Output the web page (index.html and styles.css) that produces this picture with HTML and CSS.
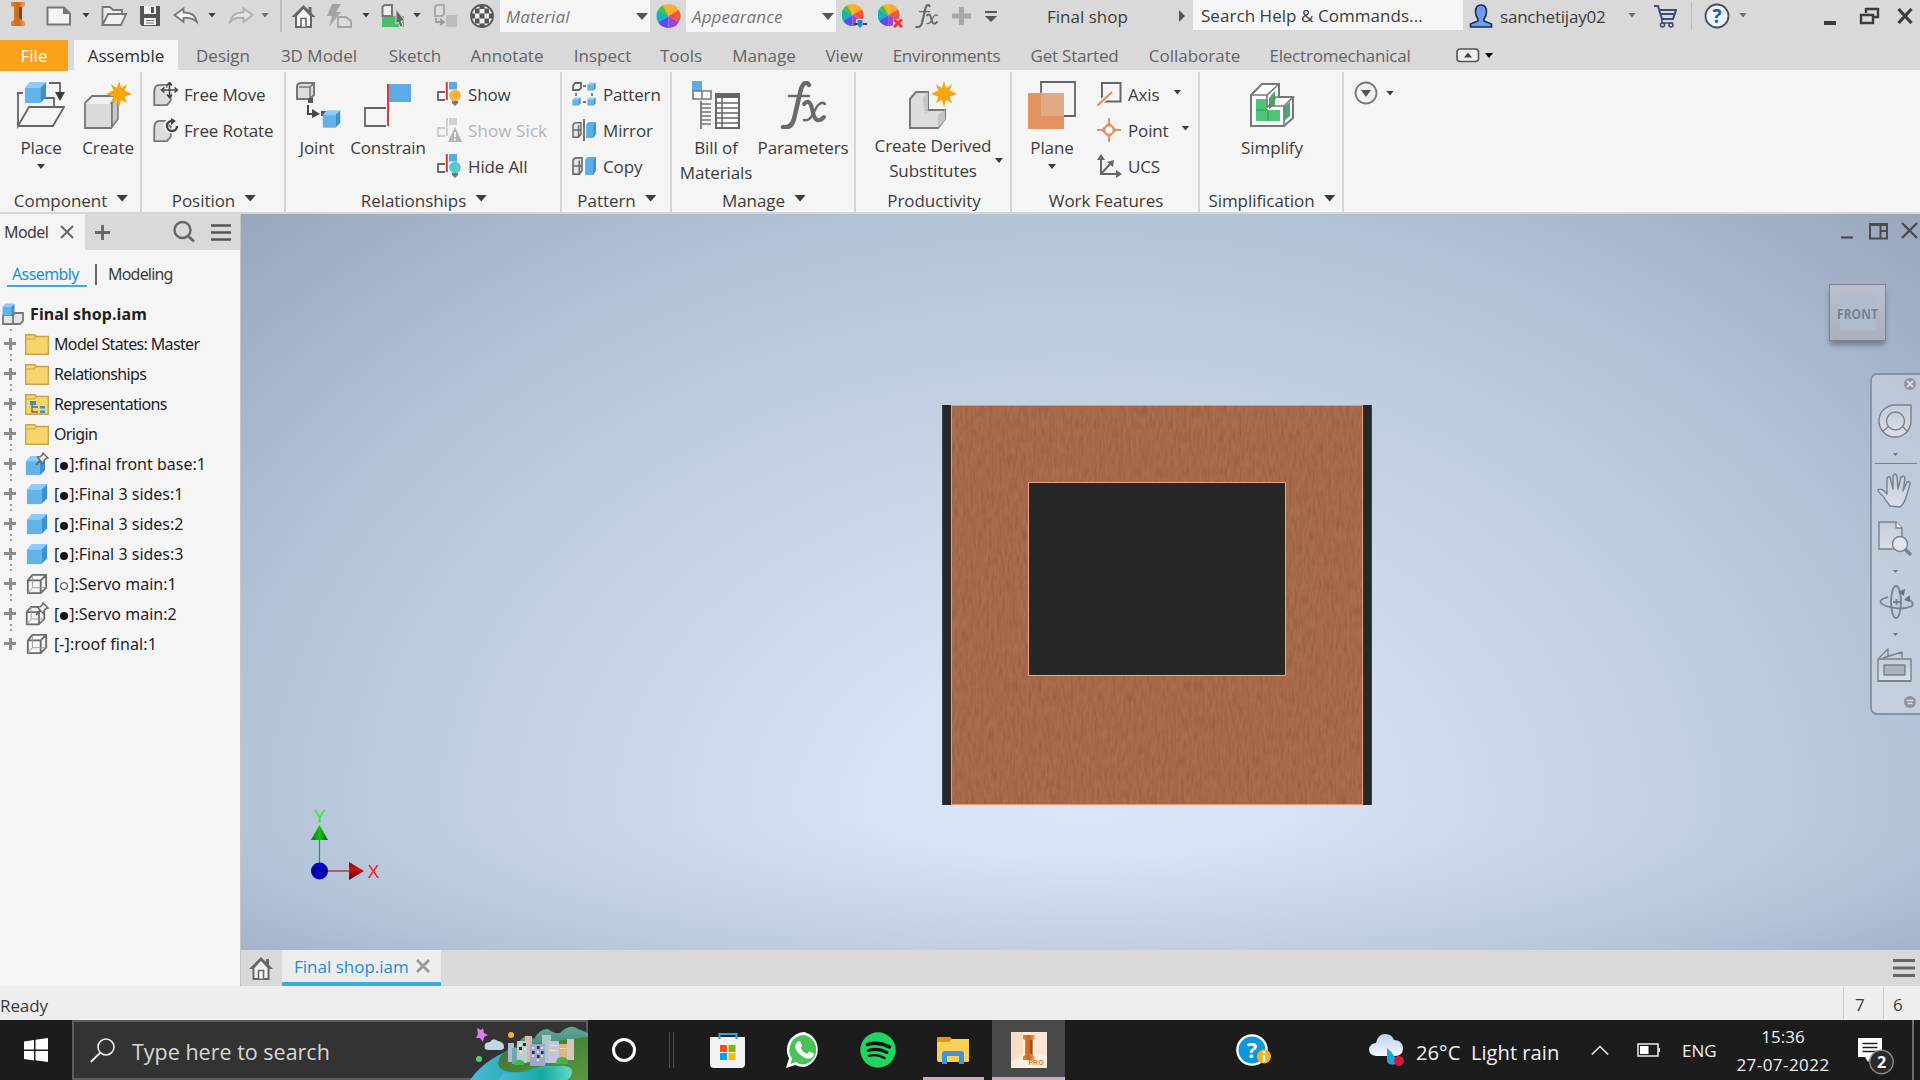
FILE: index.html
```html
<!DOCTYPE html>
<html lang="en">
<head>
<meta charset="utf-8">
<title>Final shop</title>
<link rel="stylesheet" href="styles.css">
</head>
<body>
<svg class="defs" width="0" height="0" aria-hidden="true">
  <defs>
    <linearGradient id="gBeam" x1="0" x2="1"><stop offset="0" stop-color="#e08a3a"/><stop offset=".5" stop-color="#c8661c"/><stop offset="1" stop-color="#e9a050"/></linearGradient>
    <linearGradient id="gNav" x1="0" y1="0" x2="0" y2="1"><stop offset="0" stop-color="#c4ccd8"/><stop offset="1" stop-color="#d9e0ea"/></linearGradient>
    <linearGradient id="gCone" x1="0" x2="1"><stop offset="0" stop-color="#067a06"/><stop offset=".5" stop-color="#10c010"/><stop offset="1" stop-color="#056b05"/></linearGradient>
    <linearGradient id="gConeR" x1="0" x2="0" y1="0" y2="1"><stop offset="0" stop-color="#7a0808"/><stop offset=".4" stop-color="#d01010"/><stop offset="1" stop-color="#5c0505"/></linearGradient>
    <linearGradient id="gCloud" x1="0" x2="0" y1="0" y2="1"><stop offset="0" stop-color="#bcd0f2"/><stop offset="1" stop-color="#f6f8ff"/></linearGradient>
    <linearGradient id="gWater" x1="0" x2="1"><stop offset="0" stop-color="#4fb9d8"/><stop offset=".6" stop-color="#14a8a4"/><stop offset="1" stop-color="#62dcc4"/></linearGradient>
    <linearGradient id="gGrass" x1="0" x2="1" y1="0" y2="1"><stop offset="0" stop-color="#3a7034"/><stop offset="1" stop-color="#5a983e"/></linearGradient>
    <linearGradient id="gHill" x1="0" x2="0" y1="0" y2="1"><stop offset="0" stop-color="#5ea898"/><stop offset="1" stop-color="#28604c"/></linearGradient>
    <filter id="fWood" x="0" y="0" width="100%" height="100%" color-interpolation-filters="sRGB">
      <feTurbulence type="fractalNoise" baseFrequency="0.38 0.08" numOctaves="2" seed="4"/>
      <feColorMatrix values="0 0 0 0 .52  0 0 0 0 .31  0 0 0 0 .2  .9 0 0 0 -.34"/>
    </filter>
    <symbol id="cube" viewBox="0 0 24 24"><path d="M1 7 6 1h17l-6 6z" fill="#8ccbff"/><path d="M1 7h16v16H1z" fill="#63b3e8"/><path d="m17 7 6-6v16l-6 6z" fill="#3b92d0"/></symbol>
    <symbol id="wirecube" viewBox="0 0 24 24"><g fill="none" stroke="#6b6b6b" stroke-width="2" stroke-linejoin="round"><path d="M2 8h14v14H2zM2 8l5-6h15l-6 6M22 2v14l-6 6"/><path d="M7 2v14h15M7 16l-5 6" stroke-width="1" stroke="#999"/></g></symbol>
    <symbol id="pin" viewBox="0 0 14 14"><path d="m8 1 5 5-2 .6-2 2-.4 3L5.500 9 1 13l4-5-2.500-3 3-.4 2-2z" fill="#eee" stroke="#666" stroke-width="1.400"/></symbol>
    <symbol id="folder" viewBox="0 0 24 21"><path d="M.7.7h9L11.500 2.500H23.300V20.300H.7z" fill="#f6d66c" stroke="#c9a344" stroke-width="1.400"/><path d="M1 5h8l2-2.500" fill="none" stroke="#c9a344" stroke-width="1.200"/></symbol>
    <symbol id="home" viewBox="0 0 24 24"><path d="M12 1 0 13h3.500v11h17V13H24L20 9V3h-3v3z" fill="#666"/><path d="M12 5 5.500 12v10h13V12z" fill="#f3f3f3"/><path d="M9.500 22.500v-8h5v8" fill="#fff" stroke="#666" stroke-width="1.600"/></symbol>
    <symbol id="wheel" viewBox="0 0 24 24"><g><path d="M12 12V0A12 12 0 0 1 22.400 6z" fill="#ffab26"/><path d="M12 12 1.600 6A12 12 0 0 1 12 0z" fill="#f0b429"/><path d="M12 12 22.400 6A12 12 0 0 1 22.400 18z" fill="#f2563c"/><path d="M12 12 22.400 18A12 12 0 0 1 12 24z" fill="#a340dc"/><path d="M12 12V24A12 12 0 0 1 1.600 18z" fill="#5a4df5"/><path d="M12 12 1.600 18A12 12 0 0 1 1.600 6z" fill="#0fb5b8"/><path d="M1.600 6A12 12 0 0 1 6 1.600L12 12z" fill="#49c23f"/></g></symbol>
    <symbol id="burst" viewBox="0 0 24 24"><path d="m12 0 2 6.500L19.500 3l-2.300 5.800L24 12l-6.800 2.500 2.300 6L14 17.500 12 24l-2-6.500-5.500 3 2.300-6L0 12l6.800-3.200L4.500 3 10 6.500z" fill="#f8a512"/></symbol>
    <symbol id="block" viewBox="0 0 20 24"><path d="M1 9q0-8 6-8h8v3l4 3v11l-4 5H1z" fill="#dcdcdc" stroke="#777" stroke-width="2"/></symbol>
    <symbol id="rel" viewBox="0 0 24 24"><path d="M8 10H1v8h7" fill="none" stroke="#666" stroke-width="1.800"/><path d="M9.800 0v18" stroke="#d8393a" stroke-width="2"/><path d="M12 0h8v7.500h-8z" fill="#5dabe2"/></symbol>
    <symbol id="half" viewBox="0 0 12 20"><path d="M1 4q1-3 4-3h6v14l-3 4H1zM1 10h10M8 4v15" fill="#e4e4e4" stroke="#6b6b6b" stroke-width="1.800"/></symbol>
    <symbol id="halfb" viewBox="0 0 12 20"><path d="M0 4q1-4 4-4h8v15l-3 5H0z" fill="#5aaeea"/><path d="m9 4 3-4v15l-3 5zM0 10h12" fill="#3b92d0"/></symbol>
    <symbol id="fx" viewBox="0 0 48 48"><g fill="none" stroke="#6a6a6a" stroke-linecap="round"><path d="M30 4q-4-6-8 4L15 38q-3 10-11 8" stroke-width="4.500"/><path d="M10 15h20" stroke-width="2.500"/><path d="M25 23q6-6 8 5l2 7q3 8 10 1" stroke-width="4"/><path d="M46 23q-5-4-10 6-5 12-11 10" stroke-width="2.500"/></g></symbol>
  </defs>
</svg>

<div class="app">
  <header class="titlebar">
    <svg class="i-logo" width="20" height="26" viewBox="0 0 20 26"><path d="M3 1h14v4l-3 1v13l3 2v4H3v-4l3-2V6L3 5z" fill="url(#gBeam)"/><path d="M11 6h3v13l-3-2z" fill="#8a4212"/></svg>
    <svg width="26" height="20" viewBox="0 0 26 20"><path d="M1.500 1.500H18l6 6v11H1.500z" fill="#f3f3f3" stroke="#777" stroke-width="2"/><path d="M17 1v7h7" fill="#777"/></svg>
    <i class="arr"></i>
    <svg width="27" height="22" viewBox="0 0 27 22"><path d="M1.500 20V2H9l3 3h9v4M1.500 20 7 9h18l-5 11z" fill="#f0f0f0" stroke="#777" stroke-width="1.800"/></svg>
    <svg width="24" height="24" viewBox="0 0 24 24"><path d="M2 2h20v20H4l-2-2z" fill="#555"/><path d="M6 2h12v8H6z" fill="#f3f3f3"/><path d="M13 3h3v6h-3z" fill="#555"/><path d="M6 14h12v7H6z" fill="#f3f3f3"/><path d="M8 16.500h8M8 19h8" stroke="#777"/></svg>
    <svg width="26" height="18" viewBox="0 0 26 18"><path d="m1.500 8 9-6.500V5.500Q22 5 24 15q-5-5-13.500-4v4z" fill="#f3f3f3" stroke="#777" stroke-width="1.800"/></svg>
    <i class="arr"></i>
    <svg width="26" height="18" viewBox="0 0 26 18"><path d="m24.500 8-9-6.500V5.500Q4 5 2 15q5-5 13.500-4v4z" fill="#e4e4e4" stroke="#b0b0b0" stroke-width="2"/></svg>
    <i class="arr arr-mid"></i>
    <i class="vsep"></i>
    <svg width="25" height="24"><use href="#home"/></svg>
    <svg width="26" height="24" viewBox="0 0 26 24"><path d="M5 0h9L9 8h5L2 23l3-11H0z" fill="#a4a4a4"/><path d="M11 13h8l5 4v6H11z" fill="#ddd" stroke="#a4a4a4" stroke-width="1.800"/></svg>
    <i class="arr"></i>
    <svg width="26" height="24" viewBox="0 0 26 24"><path d="M1 12h22v11H1z" fill="#45bf6c"/><path d="M1.500 12V3l2-2H11v11z" fill="#eee" stroke="#777" stroke-width="2"/><path d="m15 5 9 12h-4l2 5-3 1-2-5-2 2z" fill="#666" stroke="#d9d9d9"/></svg>
    <i class="arr"></i>
    <svg width="26" height="24" viewBox="0 0 26 24"><path d="M2 11V3l2-2h7v9l-2 2H2z" fill="#ddd" stroke="#aaa" stroke-width="2"/><path d="M3 14v4h6M7 15l4 3-4 3" fill="none" stroke="#999" stroke-width="1.800"/><path d="M13 11h11v11l-2 1H13z" fill="#bcbcbc"/></svg>
    <svg width="24" height="24" viewBox="0 0 24 24"><circle cx="12" cy="12" r="11" fill="#f0f0f0" stroke="#555" stroke-width="1.800"/><path d="M9.500 1h5v4h-5zM5 4.500h4.500v5H5zM14.500 4.500H19v5h-4.500zM9.500 9.500h5v5h-5zM1 9.500h4v5H1zM19 9.500h4v5h-4zM5 14.500h4.500v5H5zM14.500 14.500H19v5h-4.500zM9.500 19.500h5V23h-5z" fill="#555"/></svg>
    <div class="combo"><em>Material</em><i class="arr arr-lg"></i></div>
    <svg width="25" height="24"><use href="#wheel"/></svg>
    <div class="combo"><em>Appearance</em><i class="arr arr-lg"></i></div>
    <svg width="25" height="24" viewBox="0 0 25 24"><use href="#wheel" x="-1" width="23" height="22"/><path d="M14 15h11v9H14z" fill="#d9d9d9"/><path d="M12 20h4M21 20h4" stroke="#444" stroke-width="2"/><path d="M15.500 16h5v5l-2.500 3-2.500-3z" fill="#1887d6"/></svg>
    <svg width="25" height="24" viewBox="0 0 25 24"><use href="#wheel" x="-1" width="23" height="22"/><path d="M15 15h10v9H15z" fill="#d9d9d9"/><path d="m16 15.500 8 7.500m0-7.500-8 7.500" stroke="#f0353a" stroke-width="3"/></svg>
    <svg width="25" height="24"><use href="#fx"/></svg>
    <svg class="plus" width="19" height="18" viewBox="0 0 19 18"><path d="M7 0h5v6.500h7v5h-7V18H7v-6.500H0v-5h7z" fill="#a8a8a8"/></svg>
    <svg width="14" height="11" viewBox="0 0 14 11"><path d="M1 0h12v2H1zM1 5h12l-6 6z" fill="#555"/></svg>
    <span class="tt">Final shop</span>
    <svg width="7" height="12" viewBox="0 0 7 12"><path d="m1 0 6 6-6 6z" fill="#555"/></svg>
    <div class="search">Search Help &amp; Commands...</div>
    <svg width="24" height="24" viewBox="0 0 24 24"><path d="M12 1q5.500 0 5.500 7 0 4-2.500 7v2l7.500 3v3h-21v-3L9 17v-2q-2.500-3-2.500-7Q6.500 1 12 1z" fill="#6f9df5" stroke="#1c2b55" stroke-width="1.600"/></svg>
    <span class="tt user">sanchetijay02</span>
    <i class="arr arr-mid"></i>
    <svg width="24" height="24" viewBox="0 0 24 24"><path d="M1 2h4l4 13h11l3-9H6M7 10h14" fill="none" stroke="#3b4a7c" stroke-width="2"/><path d="M9 15v4h11" fill="none" stroke="#3b4a7c" stroke-width="1.600"/><circle cx="9.500" cy="21" r="2" fill="#d9d9d9" stroke="#3b4a7c" stroke-width="1.600"/><circle cx="18" cy="21" r="2" fill="#d9d9d9" stroke="#3b4a7c" stroke-width="1.600"/></svg>
    <i class="vsep vsep-thin"></i>
    <svg width="26" height="26" viewBox="0 0 26 26"><circle cx="13" cy="13" r="11.500" fill="#eef1f8" stroke="#444b5c" stroke-width="1.800"/><text x="13" y="20" text-anchor="middle" class="qmark">?</text></svg>
    <i class="arr arr-mid"></i>
    <i class="win-min"></i>
    <svg width="21" height="18" viewBox="0 0 21 18"><path d="M7 6V2h12v8h-5M2 8h12v8H2z" fill="none" stroke="#3c3c3c" stroke-width="2.400"/></svg>
    <svg width="16" height="16" viewBox="0 0 16 16"><path d="m1.500 1 13 14m0-14-13 14" stroke="#3c3c3c" stroke-width="3.200"/></svg>
  </header>

  <nav class="tabs">
    <span class="tab file">File</span><span class="tab active">Assemble</span><span class="tab">Design</span><span class="tab">3D Model</span><span class="tab">Sketch</span><span class="tab">Annotate</span><span class="tab">Inspect</span><span class="tab">Tools</span><span class="tab">Manage</span><span class="tab">View</span><span class="tab wide">Environments</span><span class="tab wide">Get Started</span><span class="tab">Collaborate</span><span class="tab wide">Electromechanical</span>
    <span class="tab-toggle"><svg width="24" height="15" viewBox="0 0 24 15"><rect x="1" y="1" width="21.500" height="12.500" rx="3" fill="#eee" stroke="#555" stroke-width="1.600"/><path d="m12 4.500 4 5H8z" fill="#444"/></svg><i class="arr arr-black"></i></span>
  </nav>

  <section class="ribbon">
    <div class="panel">
      <div class="panel-body">
        <div class="big b-82"><svg width="48" height="48" viewBox="0 0 48 48"><path d="M6 12H1v33L12 26h35L36 45H1M26 17h11v8M32 2h11v12" fill="none" stroke="#666" stroke-width="1.800"/><path d="M38 11h10l-5 9z" fill="#3c3c3c"/><use href="#cube" x="7" y="0" width="23" height="23"/></svg><span>Place</span><i class="arr"></i></div>
        <div class="big b-52"><svg width="48" height="48" viewBox="0 0 48 48"><path d="M1 22 8 15h26l-7 7v25H1z" fill="#f0f0f0" stroke="#777" stroke-width="1.800"/><path d="M2 23h25v23H2z" fill="#dadada"/><path d="m28 22 6-7v23l-6 8z" fill="#c6c6c6" stroke="#777" stroke-width="1.500"/><use href="#burst" x="22" y="0" width="26" height="26"/></svg><span>Create</span></div>
      </div>
      <div class="panel-title">Component<i class="arr arr-title"></i></div>
    </div>
    <div class="panel">
      <div class="panel-body">
        <div class="list l-11">
          <div class="row"><svg width="25" height="24" viewBox="0 0 25 24"><use href="#block" x="0" y="2" width="19" height="22"/><path d="M16.500 1v13M10 8h14" fill="none" stroke="#f5f5f5" stroke-width="4"/><path d="M16.500 1v14M9 8h15M14 3.500l2.500-3 2.500 3M14 12.500l2.500 3 2.500-3M21.500 5.500l3 2.500-3 2.500M11.500 5.500 8.500 8l3 2.500" fill="none" stroke="#444" stroke-width="1.600"/></svg><span>Free Move</span></div>
          <div class="row"><svg width="25" height="24" viewBox="0 0 25 24"><use href="#block" x="0" y="2" width="19" height="22"/><path d="M23 7a5 5 0 1 1-4-4" fill="none" stroke="#f5f5f5" stroke-width="5"/><path d="M24 8a5 5 0 1 1-5-5" fill="none" stroke="#444" stroke-width="2.400"/><path d="m18 0 5 3-5 4z" fill="#444"/></svg><span>Free Rotate</span></div>
        </div>
      </div>
      <div class="panel-title">Position<i class="arr arr-title"></i></div>
    </div>
    <div class="panel">
      <div class="panel-body">
        <div class="big b-62"><svg width="48" height="48" viewBox="0 0 48 48"><path d="M4 18V6q0-4 4-4h13v12l-4 4H4z" fill="#dcdcdc" stroke="#777" stroke-width="2"/><path d="M17 6v12M21 2l-4 4H6" fill="none" stroke="#777" stroke-width="1.500"/><path d="M15 17h5v5h-5zM28 30h5v5h-5z" fill="#555"/><path d="M15 24v9h6" fill="none" stroke="#444" stroke-width="2"/><path d="m19 28 8 5-8 4z" fill="#444"/><use href="#cube" x="29" y="28" width="19" height="20"/></svg><span>Joint</span></div>
        <div class="big b-80"><svg width="48" height="48" viewBox="0 0 48 48"><path d="M25 3h22v18H25z" fill="#5dabe2"/><path d="M22 27H1v18h21" fill="none" stroke="#666" stroke-width="1.800"/><path d="M24 3v42" stroke="#d8393a" stroke-width="2"/></svg><span>Constrain</span></div>
        <div class="list l-9">
          <div class="row"><svg width="25" height="24" viewBox="0 0 25 24"><use href="#rel" width="24" height="24"/><circle cx="18" cy="13.500" r="5.800" fill="#f6b23c"/><path d="M15 19h6v2l-3 3-3-3z" fill="#777"/></svg><span>Show</span></div>
          <div class="row disabled"><svg width="25" height="24" viewBox="0 0 25 24"><path d="M8 10H1v8h7M10 0v18" fill="none" stroke="#ccc" stroke-width="1.800"/><path d="M12 0h8v7h-8z" fill="#d2d2d2"/><path d="m18 9 7 15H11z" fill="#b4b4b4"/><path d="M18 14v5M18 20.500v2" stroke="#fff" stroke-width="1.600"/></svg><span>Show Sick</span></div>
          <div class="row"><svg width="25" height="24" viewBox="0 0 25 24"><use href="#rel" width="24" height="24"/><circle cx="18" cy="13.500" r="5.800" fill="#58c8cc"/><path d="M15 19h6v2l-3 3-3-3z" fill="#777"/></svg><span>Hide All</span></div>
        </div>
      </div>
      <div class="panel-title">Relationships<i class="arr arr-title"></i></div>
    </div>
    <div class="panel">
      <div class="panel-body">
        <div class="list l-10">
          <div class="row"><svg width="25" height="24" viewBox="0 0 25 24"><path d="M1 8V4l2-3h6v5L7 8z" fill="#eee" stroke="#666" stroke-width="1.800"/><use href="#cube" x="15" y="0" width="9" height="9"/><use href="#cube" x="0" y="15" width="9" height="9"/><use href="#cube" x="15" y="15" width="9" height="9"/><path d="M11 4h3M11 20h3M4 11v3M20 11v3" stroke="#777" stroke-width="1.800"/></svg><span>Pattern</span></div>
          <div class="row"><svg width="25" height="22" viewBox="0 0 25 22"><use href="#half" x="0" y="3" width="10" height="16"/><path d="M12 0v22" stroke="#666" stroke-width="1.800"/><use href="#halfb" x="14" y="3" width="10" height="16"/></svg><span>Mirror</span></div>
          <div class="row"><svg width="25" height="20" viewBox="0 0 25 20"><use href="#half" x="0" y="1" width="11" height="18"/><use href="#halfb" x="13" y="1" width="11" height="18"/></svg><span>Copy</span></div>
        </div>
      </div>
      <div class="panel-title">Pattern<i class="arr arr-title"></i></div>
    </div>
    <div class="panel">
      <div class="panel-body">
        <div class="big b-88"><svg width="48" height="48" viewBox="0 0 48 48"><path d="M0 0h10v10H0z" fill="#5dabe2"/><path d="M1 10h9v8H1zM10 10h9v8h-9z" fill="#fff" stroke="#777" stroke-width="1.600"/><path d="M9 20v28" stroke="#666" stroke-width="1.600"/><path d="M9 23h10M9 27h10M9 31h10M9 35h10M9 39h10M9 43h10" stroke="#777" stroke-width="1.600"/><path d="M24 13h23v34H24z" fill="#fff" stroke="#666" stroke-width="2"/><path d="M23 12h25v5H23z" fill="#666"/><path d="M24 22h23M24 27h23M24 32h23M24 37h23M24 42h23M30 16v31" stroke="#666" stroke-width="1.500"/></svg><span>Bill of<br>Materials</span></div>
        <div class="big b-86"><svg width="48" height="48"><use href="#fx"/></svg><span>Parameters</span></div>
      </div>
      <div class="panel-title">Manage<i class="arr arr-title"></i></div>
    </div>
    <div class="panel">
      <div class="panel-body">
        <div class="big b-124"><svg width="48" height="48" viewBox="0 0 48 48"><path d="M1 18 7 11h12v18h17v9l-7 9H1z" fill="#dcdcdc" stroke="#777" stroke-width="2"/><path d="m14 17 5-6v18l-3 4zM29 34l7-5v10l-7 8z" fill="#c4c4c4"/><use href="#burst" x="22" y="0" width="26" height="26"/></svg><span>Create Derived<br>Substitutes</span></div>
        <i class="arr arr-side"></i>
      </div>
      <div class="panel-title">Productivity</div>
    </div>
    <div class="panel">
      <div class="panel-body">
        <div class="big b-80"><svg width="48" height="48" viewBox="0 0 48 48"><path d="M13 1h34v34H13z" fill="none" stroke="#666" stroke-width="1.800"/><path d="M0 12h36v36H0z" fill="#e2935f"/><path d="M13 12h23v23H13z" fill="#e0aa86"/></svg><span>Plane</span><i class="arr"></i></div>
        <div class="list l-5">
          <div class="row"><svg width="25" height="24" viewBox="0 0 25 24"><path d="M5 1h18.500v18.500H5z" fill="none" stroke="#666" stroke-width="2"/><path d="M0 24 15 10" stroke="#f5f5f5" stroke-width="5"/><path d="M0 24 15 10" stroke="#e8905c" stroke-width="2.200"/></svg><span>Axis</span><i class="arr a-axis"></i></div>
          <div class="row"><svg width="25" height="24" viewBox="0 0 25 24"><path d="M12 0v24M0 12h24" stroke="#dd9468" stroke-width="2"/><path d="m12 4 8 8-8 8-8-8z" fill="#dd9468"/><circle cx="12" cy="12" r="3.500" fill="#fff"/></svg><span>Point</span><i class="arr a-point"></i></div>
          <div class="row"><svg width="25" height="24" viewBox="0 0 25 24"><path d="M4 4v16h16M4 20 14 9" fill="none" stroke="#666" stroke-width="2"/><path d="m4 0 4 6H0zM25 20l-6 4v-8zM17 6l-1 7-6-5z" fill="#666"/></svg><span>UCS</span></div>
        </div>
      </div>
      <div class="panel-title">Work Features</div>
    </div>
    <div class="panel">
      <div class="panel-body">
        <div class="big b-142"><svg width="48" height="48" viewBox="0 0 48 48"><path d="M3 14 14 3h17v13h14v21l-9 8H3z" fill="#fff" stroke="#777" stroke-width="2"/><path d="M8 18h11v11h13v11H8z" fill="#4cc57a"/><path d="m21 17 6-7v14l-6 4zM36 26l6-5v14l-6 5z" fill="#3fae68"/><path d="M3 14h16L31 3M19 14v13M20 26l8-10h17l-9 9H20M36 25v20" fill="none" stroke="#777" stroke-width="1.600"/><path d="M8 29h12M20 29v11" stroke="#2f9456"/></svg><span>Simplify</span></div>
      </div>
      <div class="panel-title">Simplification<i class="arr arr-title"></i></div>
    </div>
    <div class="ribbon-end"><svg width="24" height="24" viewBox="0 0 24 24"><circle cx="12" cy="12" r="10.500" fill="#f3f3f3" stroke="#777" stroke-width="1.800"/><path d="M7 9h10l-5 7z" fill="#555"/></svg><i class="arr"></i></div>
  </section>

  <main class="work">
    <aside class="browser">
      <div class="browser-tabs">
        <div class="browser-tab"><span>Model</span><svg width="14" height="14" viewBox="0 0 14 14"><path d="m1 1 12 12M13 1 1 13" stroke="#666" stroke-width="2"/></svg></div>
        <svg class="b-plus" width="15" height="15" viewBox="0 0 15 15"><path d="M7.500 0v15M0 7.500h15" stroke="#666" stroke-width="2.800"/></svg>
        <svg width="22" height="22" viewBox="0 0 22 22"><circle cx="9.500" cy="9" r="8" fill="none" stroke="#666" stroke-width="2.400"/><path d="m14.500 14.500 6.500 6" stroke="#666" stroke-width="2.800"/></svg>
        <svg class="b-menu" width="20" height="17" viewBox="0 0 20 17"><path d="M0 1.500h20M0 8.500h20M0 15.500h20" stroke="#555" stroke-width="2.600"/></svg>
      </div>
      <div class="modes"><span class="mode on">Assembly</span><i class="mode-sep"></i><span class="mode">Modeling</span></div>
      <div class="root"><svg width="22" height="22" viewBox="0 0 22 22"><path d="M1 12h10v9H1zM11 12l2-2h8v8l-3 3h-7z" fill="#e4e4e4" stroke="#777" stroke-width="1.800"/><use href="#cube" x="0" y="0" width="13" height="13"/></svg><b>Final shop.iam</b></div>
      <ul class="tree">
        <li><i class="exp"></i><svg width="24" height="21"><use href="#folder"/></svg><span class="group">Model States: Master</span></li>
        <li><i class="exp"></i><svg width="24" height="21"><use href="#folder"/></svg><span class="group">Relationships</span></li>
        <li><i class="exp"></i><svg width="24" height="21" viewBox="0 0 24 21"><use href="#folder"/><path d="M7 9v9h6M7 13h6" fill="none" stroke="#666" stroke-width="1.400"/><path d="M5 7h6v4H5zM15 12h5v2.500h-5zM15 16.500h5V19h-5z" fill="#3f90c8"/></svg><span class="group">Representations</span></li>
        <li><i class="exp"></i><svg width="24" height="21"><use href="#folder"/></svg><span class="group">Origin</span></li>
        <li><i class="exp"></i><svg width="24" height="24" viewBox="0 0 24 24"><use href="#cube" x="0" y="3" width="21" height="21"/><use href="#pin" x="10" y="0" width="14" height="14"/></svg><span>[<i class="dot"></i>]:final front base:1</span></li>
        <li><i class="exp"></i><svg width="24" height="22"><use href="#cube"/></svg><span>[<i class="dot"></i>]:Final 3 sides:1</span></li>
        <li><i class="exp"></i><svg width="24" height="22"><use href="#cube"/></svg><span>[<i class="dot"></i>]:Final 3 sides:2</span></li>
        <li><i class="exp"></i><svg width="24" height="22"><use href="#cube"/></svg><span>[<i class="dot"></i>]:Final 3 sides:3</span></li>
        <li><i class="exp"></i><svg width="24" height="22"><use href="#wirecube"/></svg><span>[<i class="dot ring"></i>]:Servo main:1</span></li>
        <li><i class="exp"></i><svg width="24" height="24" viewBox="0 0 24 24"><use href="#wirecube" x="0" y="3" width="21" height="21"/><use href="#pin" x="10" y="0" width="14" height="14"/></svg><span>[<i class="dot"></i>]:Servo main:2</span></li>
        <li><i class="exp"></i><svg width="24" height="22"><use href="#wirecube"/></svg><span class="loose">[-]:roof final:1</span></li>
      </ul>
    </aside>

    <section class="stage">
      <div class="viewport">
        <svg class="model" width="430" height="400" viewBox="0 0 430 400"><path d="M0 0h9v400H0z" fill="#262727"/><path d="M420.500 0h9.500v400h-9.500z" fill="#262727"/><path d="M.5 0v400M421 0v400M429.500 0v400" stroke="#3c4347"/><path d="M9 0h411.500v400H9z" fill="#a96c4d"/><path d="M9 0h411.500v400H9z" filter="url(#fWood)"/><path d="M9.500.5h411v399h-411z" fill="none" stroke="#ee9877"/><path d="M86.500 77.500h257v193h-257z" fill="#272727" stroke="#f7a283"/></svg>
        <svg class="triad" width="70" height="80" viewBox="0 0 70 80"><path d="M11.500 30v32" stroke="#18a818" stroke-width="1.200"/><path d="M11 63h31" stroke="#b01818" stroke-width="1.200"/><path d="m11.500 17 8.500 15H3z" fill="url(#gCone)"/><path d="M41 54v18l15-9z" fill="url(#gConeR)"/><circle cx="11.500" cy="63" r="8.500" fill="#06069c"/><text x="11.500" y="69" class="ax ax-z">Z</text><text x="11.500" y="15" class="ax ax-y">Y</text><text x="65.500" y="69.500" class="ax ax-x">X</text></svg>
        <div class="doc-controls"><svg width="77" height="18" viewBox="0 0 77 18"><path d="M0 15.500h12" stroke="#4c4c4c" stroke-width="2.200"/><path d="M29 2h17v14.500H29zM39.500 3v13M40 9h6" fill="none" stroke="#4c4c4c" stroke-width="2"/><path d="M28 1h19v3H28z" fill="#4c4c4c"/><path d="m61 1 15 15m0-15L61 16" stroke="#4c4c4c" stroke-width="2.400"/></svg></div>
        <div class="viewcube"><div class="face"><span>FRONT</span></div></div>
        <div class="navbar">
          <svg width="50" height="342" viewBox="0 0 50 342">
            <rect x="1" y="1" width="54" height="340" rx="6" fill="#d4dae4" fill-opacity=".5" stroke="#8591a2" stroke-width="1.800"/>
            <g stroke="#78818f" stroke-width="1.400" fill="url(#gNav)" stroke-linejoin="round">
              <circle cx="40" cy="11" r="6" fill="#8d949f" stroke="none"/><path d="m37 8 6 6m0-6-6 6" stroke="#d9dfe8" stroke-width="1.800"/>
              <path d="M26 32h15v16a16 16 0 1 1-15-16z"/><circle cx="25.500" cy="48" r="9"/><path d="m18 54-6 5M33 54l5 5"/>
              <path d="M23 80h5l-2.500 3z" fill="#69727f" stroke="none"/><path d="M5 90.500h42" stroke-width="1"/>
              <path d="M20 133q-4-5-7-10-5-4-5-6 3-3 9 4V106q0-3 3-2l3 12V103q2-4 4 0l1 13 3-12q3-2 4 1l-2 13 4-9q3-1 3 2-2 8-4 13-2 7-6 10z"/>
              <path d="M9 149h17l6 6v21H9z"/><path d="M26 149v6h6" fill="#fff"/><circle cx="30" cy="171" r="7.500" fill="#dfe5ee"/><path d="m35 176 6 6" stroke-width="3.500"/>
              <path d="M23 197h5l-2.500 3z" fill="#69727f" stroke="none"/>
              <g fill="none" stroke-width="1.800"><ellipse cx="26" cy="229" rx="5" ry="16"/><path d="M18 224q-14 4-2 9 16 5 26 0 3-4-6-8M23 229h7M26.500 226v6"/><path d="m28 219 6 4 1-7zM34 227l6 2v-7z" fill="#69727f" stroke="none"/></g>
              <path d="M23 260h5l-2.500 3z" fill="#69727f" stroke="none"/>
              <path d="m9 285 9-9v8M13 285l19-6v6" fill="none"/><path d="M8 286h33v22H8z"/><path d="M8 308h33" stroke-width="2"/><path d="M14 292h21v10H14z" fill="#aab3c0"/>
              <circle cx="40" cy="329" r="6" fill="#8d949f" stroke="none"/><path d="M36.500 327.500h7M37.500 330.500h5" stroke="#d9dfe8" stroke-width="1.500"/>
            </g>
          </svg>
        </div>
      </div>
      <div class="doc-tabs"><div class="doc-home"><svg width="24" height="24"><use href="#home"/></svg></div><div class="doc-tab"><span>Final shop.iam</span><svg width="14" height="14" viewBox="0 0 14 14"><path d="m1 1 12 12M13 1 1 13" stroke="#999" stroke-width="2.800"/></svg></div><svg class="doc-menu" width="22" height="18" viewBox="0 0 22 18"><path d="M0 1.500h22M0 9h22M0 16.500h22" stroke="#666" stroke-width="2.800"/></svg></div>
    </section>
  </main>

  <div class="status"><span>Ready</span><span class="cell c7">7</span><span class="cell">6</span></div>

  <footer class="taskbar">
    <div class="start"><svg width="24" height="24" viewBox="0 0 24 24"><path d="M0 3.500 10 2v9.500H0zM11.500 1.800 24 0v11.500H11.500zM0 13h10v9.500L0 21zM11.500 13H24v11l-12.500-1.800z" fill="#fff"/></svg></div>
    <div class="find">
      <svg class="lens" width="25" height="25" viewBox="0 0 25 25"><circle cx="16" cy="9" r="8" fill="none" stroke="#eee" stroke-width="1.600"/><path d="M10.500 14.500.8 24" stroke="#eee" stroke-width="1.800"/></svg>
      <span>Type here to search</span>
      <svg class="city" width="118" height="60" viewBox="0 0 118 60">
        <path d="M46 26Q54 13 60 16l4 3Q70 8 78 9q6 5 12 4 10-10 18-4l10 4v47H46z" fill="url(#gHill)"/>
        <path d="M0 60Q14 40 40 30q40-6 60 20l-4 10z" fill="url(#gWater)"/>
        <path d="M28 44Q30 26 60 24L118 17v43H90q14-12-10-14-14 0-28 6-22 2-24-8z" fill="url(#gGrass)"/>
        <path d="M34 52q24 2 44-5 26-4 24 6-1 5-5 7H28z" fill="url(#gWater)"/>
        <path d="M38 23h6v19h-6z" fill="#b9b7d6"/><path d="M42 28h8v16h-8z" fill="#6fa6b4"/><path d="M55 16h7v26h-7z" fill="#d8b7a8"/><path d="M72 15h9v28h-9z" fill="#a9cac4"/><path d="M47 21h10v22H47z" fill="#bccfd0"/><path d="M60 24h15v22H60z" fill="#9ba9d6"/><path d="M78 21h11v22H78z" fill="#c7c3e0"/><path d="M89 24h8v16h-8z" fill="#e0b48a"/><path d="M97 19h7v21h-7z" fill="#d9c6ba"/>
        <path d="M49 24h2v2h-2zM54 28h2v2h-2zM50 31h2v2h-2zM62 27h2v2h-2zM67 31h2v2h-2zM71 27h2v2h-2zM62 35h2v2h-2zM71 35h2v2h-2zM67 39h2v2h-2zM80 25h7v1h-7zM80 30h7v1h-7zM90 28h6v1h-6z" fill="#ffe88a"/><path d="M53 23h3v3h-3zM49 27h3v3h-3zM67 26h2.500v3H67zM62 31h2.500v3H62zM71 31h2.500v3H71zM67 35h2.500v3H67z" fill="#272c40"/>
        <path d="M44 45q1-6 6-5 5 0 4 5zM86 44q0-8 7-7 6 1 5 7z" fill="#43b649"/>
        <path d="M15 29q-2-7 5-7 3-5 8-1 6 1 6 6 0 3-4 3H18z" fill="#c3d7ea"/><path d="m7 8 4 2 2-2 1 5 4 2-4 2-1 5-3-4H6l2-4z" fill="#e27af4"/><circle cx="41" cy="15" r="3" fill="#ffb21c"/><circle cx="9" cy="39" r="3" fill="#4dd07a"/>
      </svg>
    </div>
    <div class="cortana"><i class="o"></i></div>
    <div class="grip"></div>
    <svg width="36" height="36" viewBox="0 0 36 36"><path d="M9.500 8V2h17v6" fill="none" stroke="#2aa7e4" stroke-width="2.200"/><path d="M0 5h35v27q0 4-4 4H4q-4 0-4-4z" fill="#f2f2f2"/><path d="M9.500 7V5M26.500 7V5" stroke="#2aa7e4" stroke-width="2.200"/><path d="M10 13h7v7h-7z" fill="#f25022"/><path d="M18.500 13h7v7h-7z" fill="#7fba00"/><path d="M10 21h7v7h-7z" fill="#00a4ef"/><path d="M18.500 21h7v7h-7z" fill="#ffb900"/></svg>
    <svg width="36" height="36" viewBox="0 0 36 36"><path d="M18 0a18 18 0 0 1 0 35q-5 0-8.500-2L0 36l3-9.500A18 18 0 0 1 18 0z" fill="#fff"/><path d="M18 3a15 15 0 0 1 0 29.500q-5 0-8-2.500l-5.500 2L6 26.500A15 15 0 0 1 18 3z" fill="#49c25a"/><path d="M12 9.500q2-1 3 1l1 3q0 1-1.500 2.500 2 4 6.500 6 1.500-2.500 2.500-2.500l4 2q1 .8-.5 3.200-3 3.300-7.500 1.300-7-3-10-9.500-1-4.500 2.500-7z" fill="#fff"/></svg>
    <svg width="36" height="36" viewBox="0 0 36 36"><circle cx="18" cy="18" r="17.700" fill="#1fd660"/><g fill="none" stroke="#111" stroke-linecap="round"><path d="M7.500 12.500q11-3.500 22 2.500" stroke-width="3.500"/><path d="M8.500 18.500q9.500-3 18.500 2" stroke-width="3"/><path d="M9 24q8-2.500 15.500 2" stroke-width="2.400"/></g></svg>
    <div class="task explorer"><svg width="33" height="28" viewBox="0 0 33 28"><path d="M0 1h13l2 2v6H0z" fill="#dd9c0c"/><path d="M0 6h12l3-3h17v22q0 1-2 1H2q-2 0-2-2z" fill="#fbd055"/><path d="M5 28V18q0-3 3-3h16q3 0 3 3v10h-5v-8H10v8z" fill="#3d95dd"/></svg></div>
    <div class="task inventor"><svg width="36" height="36" viewBox="0 0 36 36"><path d="M0 0h36v36H0z" fill="#fdeee0"/><path d="m0 0 12 0v22L0 30z" fill="#f9dcc4"/><path d="m24 20 12 4V0L20 0z" fill="#fae4d2"/><path d="M12 3h11.500v4l-2 1v15l2 1.500V28H12v-3.500l2-1.500V8l-2-1z" fill="url(#gBeam)"/><path d="M19 8h2.500v15L19 21z" fill="#9a5018"/><text x="25" y="33" class="pro">PRO</text></svg></div>
    <svg width="37" height="32" viewBox="0 0 37 32"><circle cx="16" cy="16" r="15.800" fill="#fff"/><circle cx="16" cy="16" r="13.500" fill="#0d96dc"/><text x="16" y="24" class="hq">?</text><circle cx="28" cy="22.500" r="7" fill="#f4b024"/><path d="M28 17v2.500M28 21v7" stroke="#fff" stroke-width="2.400"/></svg>
    <svg width="36" height="32" viewBox="0 0 36 32"><path d="M7 22Q0 21 0 15.500 1 9 7 9 9 0 16 0q7 0 9 6 8 0 9 8 0 8-8 8z" fill="url(#gCloud)"/><path d="M18 14q10 8 9 16-8 2-9-3z" fill="#1ba4e4"/><circle cx="30" cy="27" r="5" fill="#d8153a"/></svg>
    <span class="weather">26°C&nbsp; Light rain</span>
    <svg width="18" height="10" viewBox="0 0 18 10"><path d="m.8 9.500 8.200-8 8.200 8" fill="none" stroke="#e8e8e8" stroke-width="1.600"/></svg>
    <svg width="23" height="14" viewBox="0 0 23 14"><path d="M1 1h20v12H1z" fill="none" stroke="#eee" stroke-width="1.500"/><path d="M3 3h8.500v8H3z" fill="#fff"/><path d="M22.200 5v4" stroke="#eee" stroke-width="1.600"/></svg>
    <span class="lang">ENG</span>
    <div class="clock"><span class="time">15:36</span><span class="date">27-07-2022</span></div>
    <div class="notif"><svg width="38" height="38" viewBox="0 0 38 38"><path d="M0 1h24v19H13l-3 5-3-5H0z" fill="#fff"/><path d="M4.500 6.500h15M4.500 10.500h15M4.500 14.500h15" stroke="#1c1c1c" stroke-width="1.400"/><circle cx="23.500" cy="25" r="11.700" fill="#2b2b2b" stroke="#8a8a8a" stroke-width="1.400"/><text x="23.500" y="31" class="cnt">2</text></svg></div>
    <i class="peek"></i>
  </footer>
</div>
</body>
</html>
```
FILE: styles.css
```css
* { box-sizing: border-box; }
body { margin: 0; background: #f5f5f5; font-family: "Open Sans", "Noto Sans", sans-serif; font-size: 17px; color: #3c3c3c; }
svg { display: block; flex: none; }
.defs { position: absolute; }
.app { width: 1920px; height: 1080px; display: grid; grid-template-rows: 40px 32px 142px 772px 34px 60px; overflow: hidden; white-space: nowrap; }

/* dropdown triangles */
.arr { display: block; flex: none; width: 8px; height: 5px; background: #3c3c3c; clip-path: polygon(0 0, 100% 0, 50% 100%); }
.titlebar > .arr { margin: -2px 0 0 0; }
.titlebar > .arr-mid { margin-left: -1px; }
.arr-mid { background: #6d6d6d; }
.arr-black { background: #000; }
.arr-lg { width: 12px; height: 7px; background: #555; }
.arr-title { width: 12px; height: 7px; }

/* title bar */
.titlebar { background: #d9d9d9; padding-left: 8px; height: 40px; display: grid; align-items: center; justify-items: start; grid-template-rows: 32px;
  grid-template-columns: 38px 36px 19px 37px 35px 35px 20px 34px 18px 11px 36px 35px 19px 32px 20px 37px 30px 156px 30px 156px 36px 36px 37px 33px 63px 131px 15px 276px 31px 129px 24px 38px 13px 36px 84px 35px 38px 23px; }
.i-logo { margin-top: -4px; }
.plus { margin-left: 1px; }
.vsep { width: 2px; height: 32px; background: #bdbdbd; }
.vsep-thin { width: 1px; height: 28px; }
.combo { width: 150px; height: 32px; background: #f5f5f5; display: flex; align-items: center; justify-content: space-between; padding: 1px 2px 0 6px; color: #777; }
.combo em { letter-spacing: 0.1px; }
.search { width: 270px; height: 30px; margin-top: -2px; background: #f5f5f5; padding: 4px 0 0 8px; line-height: 24px; letter-spacing: 0.05px; }
.tt { padding-top: 1px; }
.user { letter-spacing: -0.2px; }
.win-min { width: 12px; height: 4px; margin-top: 13px; background: #3c3c3c; }
.qmark { font: bold 19px "Open Sans", sans-serif; fill: #2356b8; }

/* ribbon tabs */
.tabs { background: #d9d9d9; height: 30px; display: grid; grid-template-columns: 68px 110px 90px 102px 90px 94px 97px 60px 106px 54px 151px 105px 135px 156px 38px 1fr; }
.tab { text-align: center; line-height: 31px; color: #636363; }
.wide { letter-spacing: -0.2px; }
.file { background: #faa21b; color: #fff; }
.active { background: #f5f5f5; color: #2f2f2f; margin-left: 6px; }
.tab-toggle { grid-column: 15 / 17; padding-left: 38px; display: flex; align-items: center; gap: 5px; }

/* ribbon */
.ribbon { background: #f5f5f5; display: grid; grid-template-columns: 142px 144px 276px 110px 184px 156px 188px 144px 1fr; border-bottom: 2px solid #d6d6d6; }
.panel { border-right: 2px solid #d6d6d6; display: flex; flex-direction: column; }
.panel-body { height: 116px; display: flex; align-items: flex-start; }
.panel-title { height: 24px; padding-left: 2px; display: flex; align-items: center; justify-content: center; gap: 9px; letter-spacing: -0.05px; }
.panel-title .arr { margin-top: -4px; }
.big { padding-top: 9px; display: flex; flex-direction: column; align-items: center; flex: none; }
.big span { margin-top: 6px; line-height: 25px; text-align: center; letter-spacing: -0.1px; }
.big .arr { margin-top: 4px; }
.b-52 { width: 52px; } .b-62 { width: 62px; } .b-80 { width: 80px; } .b-82 { width: 82px; } .b-86 { width: 86px; } .b-88 { width: 88px; } .b-142 { width: 144px; }
.b-124 { width: 124px; margin-left: 15px; }
.b-124 span { margin-top: 4px; }
.arr-side { margin-top: 86px; }
.list { padding-top: 4px; }
.l-5 { margin-left: 5px; } .l-9 { margin-left: 9px; } .l-10 { margin-left: 10px; } .l-11 { margin-left: 11px; }
.row { height: 36px; display: flex; align-items: center; gap: 6px; }
.row span { letter-spacing: -0.15px; }
.disabled { color: #b4b4b4; }
.disabled span { letter-spacing: 0.1px; }
.a-axis { margin: -4px 0 0 8px; } .a-point { margin: -4px 0 0 7px; }
.ribbon-end { display: flex; gap: 8px; align-items: center; height: 24px; margin: 9px 0 0 10px; }

/* model browser */
.work { display: grid; grid-template-columns: 241px 1fr; }
.browser { border-right: 1px solid #c4c4c4; background: #f5f5f5; font-family: "Noto Sans", "Open Sans", sans-serif; font-size: 16px; }
.browser-tabs { height: 36px; background: #d9d9d9; display: flex; align-items: center; }
.browser-tab { width: 85px; height: 36px; background: #f5f5f5; display: flex; align-items: center; justify-content: space-between; padding: 0 11px 0 4px; }
.browser-tab span { letter-spacing: -0.6px; }
.b-plus { margin: 0 63px 0 10px; }
.b-menu { margin-left: 16px; }
.modes { display: flex; align-items: center; height: 48px; padding-left: 7px; }
.mode { line-height: 22px; letter-spacing: -0.8px; }
.on { width: 80px; height: 24px; padding-left: 5px; color: #1a8fd6; border-bottom: 2px solid #3aace2; margin-top: 2px; letter-spacing: -0.6px; }
.mode-sep { width: 2px; height: 21px; background: #666; margin: 0 11px 0 8px; }
.root { height: 30px; display: flex; align-items: center; gap: 6px; padding-left: 2px; color: #1e1e1e; margin-top: 1px; }
.root b { letter-spacing: 0.1px; }
.tree { list-style: none; margin: 0; padding: 0; color: #1e1e1e; }
.tree li { height: 30px; display: flex; align-items: center; padding-left: 4px; background: repeating-linear-gradient(#9c9c9c 0 2px, transparent 2px 5px) 10px 0 / 2px 30px no-repeat; }
.tree li:last-child { background-size: 2px 14px; }
.tree svg { margin-right: 5px; }
.tree .group { letter-spacing: -0.65px; }
.tree .loose { letter-spacing: 0.1px; }
.exp { width: 12px; height: 20px; margin-right: 9px; background: linear-gradient(#8c8c8c, #8c8c8c) 0 8px / 12px 3px no-repeat, linear-gradient(#8c8c8c, #8c8c8c) 4.500px 4px / 3px 12px no-repeat, #f5f5f5; }
.dot { display: inline-block; width: 8px; height: 8px; border-radius: 50%; background: #151515; margin: 0 1px; }
.ring { background: none; border: 1px solid #333; }

/* graphics window */
.stage { display: grid; grid-template-rows: 736px 36px; }
.viewport { position: relative; overflow: hidden; background:
  radial-gradient(70.7% 141.4% at 50% 100%, #dae5f7 0, #d7e2f4 18%, #cad7e8 38%, #b4c4d9 70%, #98a7be 100%) 0 0 / 100% 596px no-repeat,
  radial-gradient(70.7% 193% at 50% 0, #dae5f7 0, #d7e2f4 18%, #cad7e8 38%, #b4c4d9 70%, #98a7be 100%) 0 596px / 100% 140px no-repeat; }
.model { position: absolute; left: 701px; top: 191px; }
.triad { position: absolute; left: 67px; top: 594px; overflow: visible; }
.ax { font: 18px "Liberation Sans", sans-serif; text-anchor: middle; }
.ax-y { fill: #24ee24; } .ax-x { fill: #ff2020; } .ax-z { fill: #0000ff; }
.doc-controls { position: absolute; right: 2px; top: 8px; }
.viewcube { position: absolute; left: 1588px; top: 70px; width: 57px; height: 57px; border: 1px solid #7b8492; background: linear-gradient(#b9c1cf, #a9b1be); display: grid; place-items: center; box-shadow: 0 5px 5px -1px rgba(80, 90, 110, .6); }
.face { width: 35px; height: 35px; background: #b0bccb; display: flex; align-items: center; justify-content: center; font: bold 15px "Open Sans", sans-serif; color: #76808f; }
.face span { transform: scaleX(.8); }
.navbar { position: absolute; right: 0; top: 159px; }

/* document tabs, status */
.doc-tabs { background: #d9d9d9; display: flex; align-items: center; }
.doc-home { width: 41px; padding: 0 0 0 8px; }
.doc-tab { width: 159px; height: 36px; background: #ededed; border-bottom: 4px solid #3aace2; display: flex; align-items: center; justify-content: space-between; padding: 0 11px 0 12px; color: #1a8fd6; }
.doc-menu { margin: -1px 5px 0 auto; }
.status { background: #eee; display: flex; align-items: center; line-height: 34px; }
.status span { padding-top: 5px; letter-spacing: -0.1px; }
.cell { width: 37px; height: 32px; border-left: 1px solid #ccc; line-height: 26px; padding-left: 9px; }
.c7 { margin-left: auto; width: 40px; padding-left: 11px; }

/* taskbar */
.taskbar { background: #1c1c1c; color: #f2f2f2; display: grid; align-items: center; grid-template-rows: 60px; grid-template-columns: 72px 516px 81px 41px 76px 74px 63px 69px 244px 133px 47px 175px 46px 45px 54px 122px 54px 8px; }
.start { padding-left: 24px; }
.find { height: 60px; background: #333; border: 2px solid #5c5c5c; display: flex; align-items: center; color: #d8d8d8; font-size: 21.500px; }
.find span { padding-top: 2px; }
.lens { margin: 0 17px 0 16px; }
.city { margin: 0 -2px 0 auto; }
.cortana { padding-left: 24px; }
.o { display: block; width: 24px; height: 24px; border: 3px solid #fff; border-radius: 50%; }
.grip { width: 5px; height: 36px; border: solid #4c4c4c; border-width: 0 1px; }
.task { height: 60px; display: grid; place-items: center; border-bottom: 3px solid #cbaac9; padding-top: 3px; }
.explorer { width: 61px; }
.inventor { width: 73px; background: #494949; }
.pro { font: bold 7px "Liberation Sans", sans-serif; fill: #e87b1e; text-anchor: middle; }
.hq { font: bold 22px "Open Sans", sans-serif; fill: #fff; text-anchor: middle; }
.weather { font-size: 20.200px; padding-top: 4px; }
.lang { padding-top: 1px; }
.clock { width: 94px; display: grid; justify-content: center; justify-items: center; row-gap: 5px; line-height: 23px; }
.date { letter-spacing: 0.45px; }
.notif { padding-top: 11px; }
.cnt { font: bold 16px "Open Sans", sans-serif; fill: #fff; text-anchor: middle; }
.peek { width: 2px; height: 60px; background: #6e6e6e; }
```
